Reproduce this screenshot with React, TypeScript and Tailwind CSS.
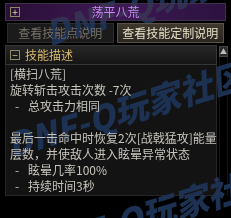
type Line = { text: string; dash?: boolean }

const lines: Line[] = [
  { text: "[横扫八荒]" },
  { text: "旋转斩击攻击次数 -7次" },
  { text: "总攻击力相同", dash: true },
  { text: "" },
  { text: "最后一击命中时恢复2次[战戟猛攻]能量" },
  { text: "层数，并使敌人进入眩晕异常状态" },
  { text: "眩晕几率100%", dash: true },
  { text: "持续时间3秒", dash: true },
]

const Watermark = ({ className }: { className: string }) => (
  <div
    className={`pointer-events-none absolute whitespace-nowrap font-black italic text-[34px] leading-none text-[#1d3152] mix-blend-lighten -rotate-[17deg] ${className}`}>
    DNF-Q玩家社区
  </div>
)

export default function App() {
  return (
    <div
      className="relative w-[231px] h-[218px] overflow-hidden bg-black text-[12px] leading-[16px]"
      style={{ fontFamily: '"Noto Sans CJK SC", "Noto Sans", sans-serif' }}>
      {/* title */}
      <div className="relative mx-[5px] mt-[3px] h-[18px] flex items-center justify-center border border-[#3c3346] bg-gradient-to-r from-[#2a0f36] via-[#3d1a55] to-[#2c1240]">
        <div className="absolute left-[4px] top-[3px] w-[10px] h-[10px] border border-[#8c8c5c] flex items-center justify-center text-[#d8d89a] text-[10px] leading-none">
          +
        </div>
        <span className="text-[#c98cf2]">荡平八荒</span>
      </div>

      {/* tabs */}
      <div className="flex gap-[3px] mx-[7px] mt-[2px] h-[20px]">
        <div className="w-[108px] flex items-center justify-center border border-[#2c2c2c] bg-[#1b1b1b] text-[#77726a]">
          查看技能点说明
        </div>
        <div className="w-[109px] flex items-center justify-center border border-[#5a5346] bg-gradient-to-b from-[#3e382e] to-[#29251f] text-[#e6dfc8]">
          查看技能定制说明
        </div>
      </div>

      {/* description */}
      <div className="flex mx-[5px] mt-[2px]">
        <div className="w-[212px]">
          <div className="h-[20px] flex items-center gap-[5px] pl-[4px] border border-[#363636] bg-gradient-to-b from-[#262626] to-[#151515]">
            <div className="w-[10px] h-[10px] border border-[#8a8a6a] flex items-center justify-center text-[#d8c890] text-[10px] leading-none">
              −
            </div>
            <span className="text-[#d9bb6c]">技能描述</span>
          </div>
          <div className="h-[131px] border border-[#262626] border-t-0 bg-[#131313] px-[4px] pt-[1px]">
            {lines.map((l, i) => (
              <div key={i} className="h-[16px] flex whitespace-pre text-[#c6c4bc]">
                {l.dash && <span className="pl-[5px] w-[18px]">-</span>}
                {l.text}
              </div>
            ))}
          </div>
        </div>
        <div className="ml-[2px] w-[9px] flex flex-col">
          <div className="mt-[1px] h-[11px] border border-[#444] bg-[#2a2a2a] flex items-center justify-center text-[#bbb] text-[7px] leading-none">
            ▲
          </div>
          <div className="flex-1 border-x border-[#151515]" />
        </div>
      </div>

      <Watermark className="left-[2px] top-[92px]" />
      <Watermark className="left-[40px] top-[-20px]" />
      <Watermark className="left-[30px] top-[195px]" />
    </div>
  )
}
